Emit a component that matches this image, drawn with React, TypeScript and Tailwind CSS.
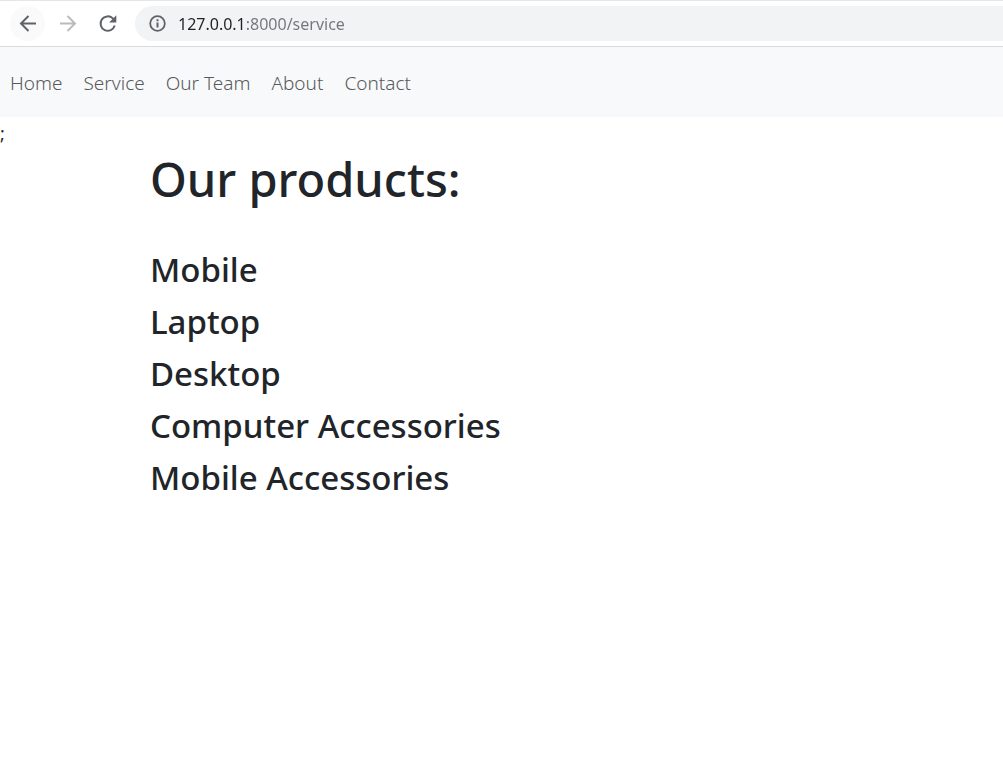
const links = [
  { label: "Home", href: "/" },
  { label: "Service", href: "/service" },
  { label: "Our Team", href: "/team" },
  { label: "About", href: "/about" },
  { label: "Contact", href: "/contact" },
];

const products = [
  "Mobile",
  "Laptop",
  "Desktop",
  "Computer Accessories",
  "Mobile Accessories",
];

function BrowserBar() {
  return (
    <header className="flex items-center border-t border-b border-t-[#e3e6ea] border-b-[#d9dbde] bg-white py-[5px] pl-[10px]">
      <button
        type="button"
        aria-label="Back"
        className="flex size-[35px] items-center justify-center rounded-full bg-[#fafafa] text-[#5f6368]"
      >
        <svg className="size-6" viewBox="0 0 24 24" fill="none" stroke="currentColor" strokeWidth="2">
          <path d="M20 11.500H5M12.500 4L5 11.500l7.500 7.500" />
        </svg>
      </button>
      <button
        type="button"
        aria-label="Forward"
        className="ml-[5px] flex size-[35px] items-center justify-center rounded-full text-[#babcbe]"
      >
        <svg className="size-6" viewBox="0 0 24 24" fill="none" stroke="currentColor" strokeWidth="2">
          <path d="M4 11.500h15M11.500 4L19 11.500l-7.500 7.500" />
        </svg>
      </button>
      <button
        type="button"
        aria-label="Reload"
        className="ml-[5px] flex size-[35px] items-center justify-center rounded-full text-[#5f6368]"
      >
        <svg className="size-6" viewBox="0 0 24 24" fill="none">
          <path d="M18.700 13.500A7.200 7.200 0 1 1 16.800 6.400L18 7.600" stroke="currentColor" strokeWidth="2" />
          <path d="M20.300 3.300v7.200h-7.200z" fill="currentColor" />
        </svg>
      </button>
      <div className="ml-[10px] flex h-[35px] min-w-0 flex-1 items-center rounded-l-full bg-[#f1f3f4] pl-[14px]">
        <svg className="size-[17px] shrink-0 text-[#5f6368]" viewBox="0 0 17 17" fill="none" aria-hidden="true">
          <circle cx="8.500" cy="8.500" r="7.300" stroke="currentColor" strokeWidth="1.800" />
          <path d="M8.500 7.500v5M8.500 4.300v1.900" stroke="currentColor" strokeWidth="2" />
        </svg>
        <input
          aria-label="Address"
          type="text"
          defaultValue="127.0.0.1:8000/service"
          className="ml-3 min-w-0 flex-1 bg-[linear-gradient(to_right,#202124_67px,#72767a_67px)] bg-clip-text text-[16px] leading-6 text-transparent outline-none"
        />
      </div>
    </header>
  );
}

export default function App() {
  return (
    <div className="min-h-screen bg-white font-['Noto_Sans','Open_Sans',sans-serif] text-[#212529]">
      <BrowserBar />
      <nav className="flex h-[70px] items-center gap-[21px] bg-[#f8f9fa] px-[10px] pt-[2px]">
        {links.map((link) => (
          <a key={link.label} href={link.href} className="text-[19px] leading-[30px] font-light text-[#59595b]">
            {link.label}
          </a>
        ))}
      </nav>
      <main>
        <p className="h-8 text-[18px] leading-8">;</p>
        <div className="px-[150px]">
          <h1 className="text-[47px] leading-[60px] font-medium">Our products:</h1>
          <ul className="mt-10 flex flex-col gap-[10px]">
            {products.map((product) => (
              <li key={product}>
                <h3 className="text-[33px] leading-[42px] font-medium">{product}</h3>
              </li>
            ))}
          </ul>
        </div>
      </main>
    </div>
  );
}
